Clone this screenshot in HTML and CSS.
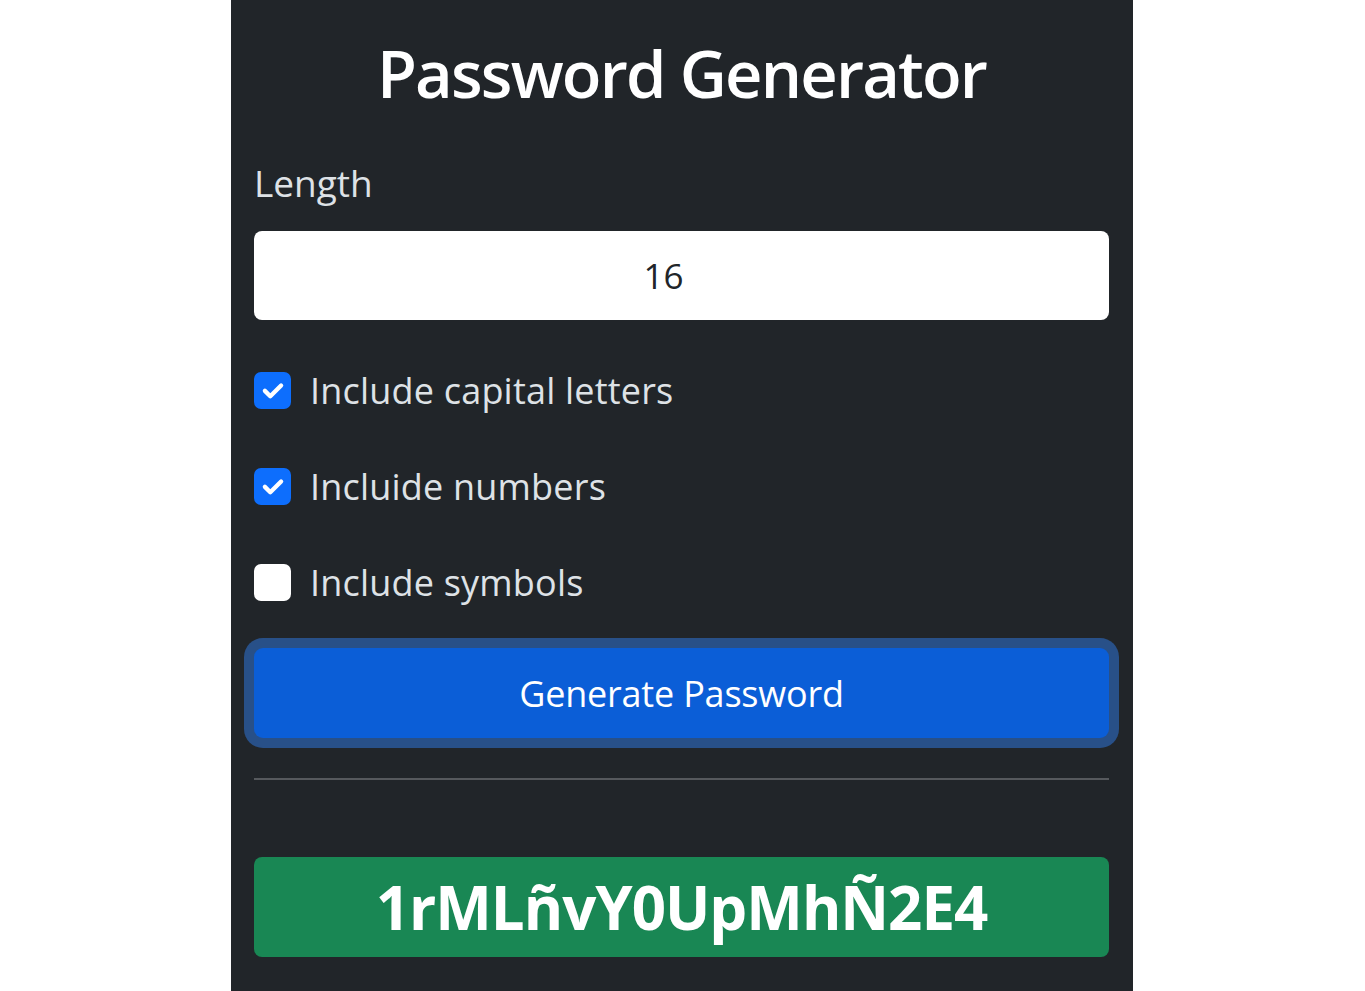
FILE: index.html
```html
<!DOCTYPE html>
<html lang="en">
<head>
<meta charset="utf-8">
<title>Password Generator</title>
<link rel="stylesheet" href="styles.css">
</head>
<body>
<main class="panel">
  <h1 class="title">Password Generator</h1>
  <label class="label" for="len">Length</label>
  <div class="input">16</div>
  <div class="options">
    <div class="check">
      <span class="box on"><svg class="tick" viewBox="0 0 20 20"><path d="M5.5 10.5l3 3L14.5 7.5" fill="none" stroke="#fff" stroke-width="2.4" stroke-linecap="round" stroke-linejoin="round"/></svg></span>
      <span class="check-text">Include capital letters</span>
    </div>
    <div class="check">
      <span class="box on"><svg class="tick" viewBox="0 0 20 20"><path d="M5.5 10.5l3 3L14.5 7.5" fill="none" stroke="#fff" stroke-width="2.4" stroke-linecap="round" stroke-linejoin="round"/></svg></span>
      <span class="check-text">Incluide numbers</span>
    </div>
    <div class="check">
      <span class="box"></span>
      <span class="check-text">Include symbols</span>
    </div>
  </div>
  <button class="btn">Generate Password</button>
  <hr class="rule">
  <div class="result">1rMLñvY0UpMhÑ2E4</div>
</main>
</body>
</html>
```
FILE: styles.css
```css
html, body {
  margin: 0;
  padding: 0;
  background: #ffffff;
}
body {
  font-family: "Open Sans", "Noto Sans", sans-serif;
}
.panel {
  box-sizing: border-box;
  width: 902px;
  min-height: 991px;
  margin-left: 231px;
  background: #212529;
  padding: 30px 24px 0 23px;
  display: flex;
  flex-direction: column;
  color: #dee2e6;
}
.title {
  margin: 0;
  font-size: 65px;
  font-weight: 600;
  line-height: 86px;
  text-align: center;
  color: #ffffff;
  letter-spacing: -1.8px;
}
.label {
  margin-top: 40px;
  font-size: 37px;
  line-height: 54px;
  color: #dee2e6;
}
.input {
  margin-top: 21px;
  height: 89px;
  box-sizing: border-box;
  background: #ffffff;
  border-radius: 8px;
  display: flex;
  align-items: center;
  justify-content: center;
  padding-right: 36px;
  font-size: 35px;
  color: #212529;
}
.options {
  margin-top: 43px;
  display: flex;
  flex-direction: column;
  gap: 42px;
}
.check {
  display: flex;
  align-items: center;
  gap: 19px;
  height: 54px;
}
.box {
  width: 37px;
  height: 37px;
  border-radius: 7px;
  background: #ffffff;
  display: flex;
  align-items: center;
  justify-content: center;
  flex: none;
}
.box.on {
  background: #0d6efd;
}
.tick {
  width: 36px;
  height: 36px;
}
.check-text {
  font-size: 36px;
  color: #dee2e6;
  letter-spacing: 0.2px;
}
.btn {
  margin-top: 39px;
  height: 90px;
  border: none;
  border-radius: 9px;
  background: #0b5ed7;
  color: #ffffff;
  font-family: inherit;
  font-size: 36px;
  letter-spacing: -0.2px;
  box-shadow: 0 0 0 10px rgba(49, 132, 253, 0.45);
}
.rule {
  margin: 40px 0 0;
  border: none;
  height: 2px;
  background: #56595d;
}
.result {
  margin-top: 77px;
  height: 100px;
  border-radius: 8px;
  background: #198754;
  color: #ffffff;
  font-size: 60px;
  font-weight: 700;
  display: flex;
  align-items: center;
  justify-content: center;
  letter-spacing: -1px;
}
```
